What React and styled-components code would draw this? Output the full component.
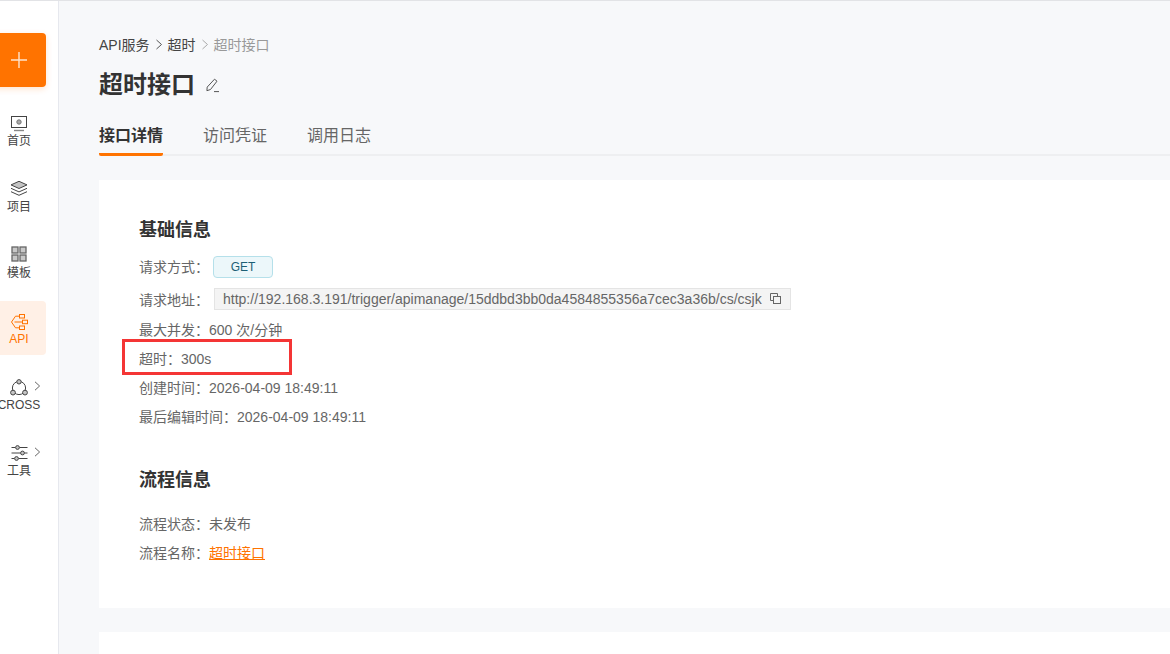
import styled, { createGlobalStyle } from "styled-components";

const GlobalStyle = createGlobalStyle`
  html, body {
    margin: 0;
    padding: 0;
    height: 100%;
    overflow: hidden;
    background: #f7f8fa;
    font-family: "Liberation Sans", "Noto Sans CJK SC", sans-serif;
  }
  * { box-sizing: border-box; }
`;

const Page = styled.div`
  display: flex;
  width: 1170px;
  height: 654px;
  overflow: hidden;
  border-top: 1px solid #e2e3e6;
`;

const Sidebar = styled.aside`
  flex: 0 0 59px;
  background: #fff;
  border-right: 1px solid #e6e8ee;
  display: flex;
  flex-direction: column;
  padding-top: 32px;
`;

const AddButton = styled.div`
  width: 54px;
  height: 54px;
  margin-left: -8px;
  flex: none;
  background: #ff7300;
  border-radius: 4px;
  box-shadow: 0 2px 6px rgba(255, 115, 0, 0.2);
  display: flex;
  align-items: center;
  justify-content: center;
  margin-bottom: 16px;
`;

const NavList = styled.nav`
  display: flex;
  flex-direction: column;
  gap: 12px;
  margin-left: -8px;
`;

const NavItem = styled.div`
  position: relative;
  width: 54px;
  height: 54px;
  padding-top: 4px;
  border-radius: 4px;
  display: flex;
  flex-direction: column;
  align-items: center;
  justify-content: center;
  background: ${(p) => (p.$active ? "#fff0e6" : "transparent")};
  color: ${(p) => (p.$active ? "#ff7300" : "#444")};
  font-size: 12px;
  line-height: 16px;
  white-space: nowrap;
  svg { flex: none; margin-bottom: 1px; overflow: visible; }
`;

const Chevron = styled.svg`
  position: absolute;
  right: 5px;
  top: 14px;
`;

const Main = styled.main`
  flex: 1;
  min-width: 0;
  padding: 32px 0 0 40px;
`;

const Crumbs = styled.div`
  display: flex;
  align-items: center;
  height: 22px;
  font-size: 14px;
  color: #444;
  svg { margin: 0 5px; }
`;

const CrumbLast = styled.span`
  color: #999;
`;

const TitleRow = styled.div`
  display: flex;
  align-items: center;
  gap: 10px;
  margin-top: 12px;
  height: 36px;
`;

const Title = styled.h1`
  margin: 0;
  font-size: 24px;
  font-weight: 700;
  line-height: 36px;
  color: #333;
`;

const Tabs = styled.div`
  display: flex;
  gap: 40px;
  height: 38px;
  margin-top: 15px;
  border-bottom: 2px solid #eeeff1;
`;

const Tab = styled.div`
  height: 38px;
  font-size: 16px;
  line-height: 36px;
  font-weight: ${(p) => (p.$active ? 700 : 400)};
  color: ${(p) => (p.$active ? "#333" : "#666")};
  border-bottom: 3px solid ${(p) => (p.$active ? "#ff7300" : "transparent")};
  border-radius: 0 0 2px 2px;
`;

const Card = styled.section`
  background: #fff;
  margin-top: 24px;
  padding: ${(p) => (p.$empty ? "0" : "37px 40px 0")};
  height: ${(p) => p.$height}px;
`;

const Heading = styled.h2`
  margin: ${(p) => p.$top || 0}px 0 0;
  font-size: 18px;
  font-weight: 700;
  line-height: 26px;
  color: #333;
`;

const Row = styled.div`
  position: relative;
  display: flex;
  align-items: center;
  height: 29px;
  font-size: 14px;
  color: #666;
  white-space: pre;
  margin-top: ${(p) => p.$top || 0}px;
`;

const Pill = styled.span`
  display: inline-flex;
  align-items: center;
  justify-content: center;
  width: 60px;
  height: 22px;
  margin: 2px 0 0 4px;
  font-size: 12px;
  color: #1c5f75;
  background: #ecf7fa;
  border: 1px solid #b5e0ea;
  border-radius: 4px;
`;

const UrlBox = styled.span`
  display: inline-flex;
  align-items: center;
  gap: 8px;
  height: 22px;
  margin-left: 5px;
  padding: 0 9px 0 8px;
  font-size: 14px;
  color: #666;
  background: #f4f4f4;
  border: 1px solid #e4e4e4;
`;

const Link = styled.a`
  color: #ff7300;
  text-decoration: underline;
`;

// red annotation drawn over the screenshot
const Highlight = styled.div`
  position: absolute;
  left: -17px;
  top: -4px;
  width: 170px;
  height: 36px;
  border: 3px solid #f43535;
`;

const Stroke = { fill: "none", stroke: "currentColor", strokeWidth: 1 };

const HomeIcon = () => (
  <svg width="16" height="16" viewBox="0 0 16 16" {...Stroke}>
    <rect x="0.5" y="0.5" width="15" height="11" />
    <circle cx="8" cy="6" r="2.2" fill="#aaa" stroke="#777" />
    <path d="M3 14.5h10" stroke="#888" strokeWidth="1.4" />
  </svg>
);

const LayersIcon = () => (
  <svg width="18" height="16" viewBox="0 1.5 18 16" {...Stroke}>
    <path d="M9 .8 17 4.4 9 8 1 4.4Z" fill="#c4c4c4" />
    <path d="M1 7.8 9 11.4l8-3.6" />
    <path d="M1 11.2 9 14.8l8-3.6" />
  </svg>
);

const GridIcon = () => (
  <svg width="16" height="16" viewBox="0 2 16 16" fill="#c8c8c8" stroke="#666" strokeWidth="1.3">
    <rect x="1" y="1" width="6" height="6" />
    <rect x="9" y="1" width="6" height="6" />
    <rect x="1" y="9" width="6" height="6" />
    <rect x="9" y="9" width="6" height="6" />
  </svg>
);

const ApiIcon = () => (
  <svg width="18" height="16" viewBox="0 0 18 16" {...Stroke}>
    <rect x="9.5" y="0.5" width="5" height="3.5" />
    <rect x="12.5" y="6.2" width="5" height="3.5" />
    <rect x="9.5" y="12" width="5" height="3.5" />
    <path d="M9.5 2.2H5.5L1.5 8l4 5.8h4M4.5 8h8" />
  </svg>
);

const CrossIcon = () => (
  <svg width="18" height="17" viewBox="0 0 18 17" {...Stroke}>
    <circle cx="9" cy="9" r="6.6" />
    <circle cx="9" cy="2.8" r="2.2" fill="#c4c4c4" />
    <circle cx="3" cy="13.6" r="2.4" fill="#c4c4c4" />
    <circle cx="15" cy="13.6" r="2.4" fill="#c4c4c4" />
  </svg>
);

const SlidersIcon = () => (
  <svg width="17" height="16" viewBox="0 1 17 16" {...Stroke}>
    <path d="M.5 2.5h4M8.5 2.5h8M.5 8h9M13.5 8h3M.5 13.5h3M7.5 13.5h9" />
    <circle cx="6.5" cy="2.5" r="1.9" fill="#c4c4c4" />
    <circle cx="11.5" cy="8" r="1.9" fill="#c4c4c4" />
    <circle cx="5.5" cy="13.5" r="1.9" fill="#c4c4c4" />
  </svg>
);

const ChevronRight = ({ color = "#555" }) => (
  <svg width="8" height="11" viewBox="0 0 8 11" fill="none" stroke={color} strokeWidth="1">
    <path d="M1.5 1 6.5 5.5 1.5 10" />
  </svg>
);

const navItems = [
  { label: "首页", icon: <HomeIcon /> },
  { label: "项目", icon: <LayersIcon /> },
  { label: "模板", icon: <GridIcon /> },
  { label: "API", icon: <ApiIcon />, active: true },
  { label: "CROSS", icon: <CrossIcon />, more: true },
  { label: "工具", icon: <SlidersIcon />, more: true },
];

const App = () => (
  <>
    <GlobalStyle />
    <Page>
      <Sidebar>
        <AddButton>
          <svg width="16" height="16" viewBox="0 0 16 16" stroke="#ffe3cc" strokeWidth="1.4">
            <path d="M8 0v16M0 8h16" />
          </svg>
        </AddButton>
        <NavList>
          {navItems.map((item) => (
            <NavItem key={item.label} $active={item.active}>
              {item.icon}
              {item.label}
              {item.more && (
                <Chevron width="7" height="10" viewBox="0 0 7 10" fill="none" stroke="#666" strokeWidth="1">
                  <path d="M1 .8 5.6 5 1 9.2" />
                </Chevron>
              )}
            </NavItem>
          ))}
        </NavList>
      </Sidebar>
      <Main>
        <Crumbs>
          API服务
          <ChevronRight />
          超时
          <ChevronRight color="#aaa" />
          <CrumbLast>超时接口</CrumbLast>
        </Crumbs>
        <TitleRow>
          <Title>超时接口</Title>
          <svg width="15" height="15" viewBox="0 0 15 15" fill="none" stroke="#555" strokeWidth="1">
            <path d="M9.5 1.2 12 3.2 5.5 11.5l-3.6 1.2.3-3.6Z" />
            <path d="M9 13.6h5" />
          </svg>
        </TitleRow>
        <Tabs>
          <Tab $active>接口详情</Tab>
          <Tab>访问凭证</Tab>
          <Tab>调用日志</Tab>
        </Tabs>
        <Card $height={428}>
          <Heading>基础信息</Heading>
          <Row $top={8}>
            请求方式：
            <Pill>GET</Pill>
          </Row>
          <Row $top={4}>
            请求地址：
            <UrlBox>
              http://192.168.3.191/trigger/apimanage/15ddbd3bb0da4584855356a7cec3a36b/cs/csjk
              <svg width="11" height="11" viewBox="0 0 11 11" fill="none" stroke="#666" strokeWidth="1">
                <rect x="3.5" y="3.5" width="7" height="7" />
                <path d="M7.5 3.5V.5h-7v7h3" />
              </svg>
            </UrlBox>
          </Row>
          <Row $top={1}>最大并发：600 次/分钟</Row>
          <Row>
            超时：300s
            <Highlight />
          </Row>
          <Row>创建时间：2026-04-09 18:49:11</Row>
          <Row>最后编辑时间：2026-04-09 18:49:11</Row>
          <Heading $top={37}>流程信息</Heading>
          <Row $top={15}>流程状态：未发布</Row>
          <Row>
            流程名称：<Link>超时接口</Link>
          </Row>
        </Card>
        <Card $empty $height={40} />
      </Main>
    </Page>
  </>
);

export default App;
